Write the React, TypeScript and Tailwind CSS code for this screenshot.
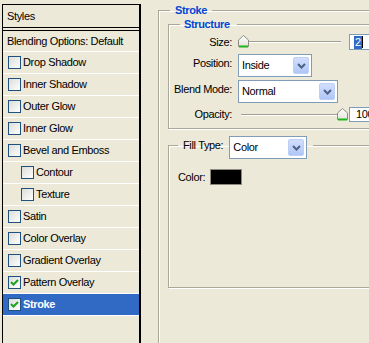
type StyleRow = { label: string; sub?: boolean; on?: boolean; active?: boolean };

const rows: StyleRow[] = [
  { label: "Drop Shadow" },
  { label: "Inner Shadow" },
  { label: "Outer Glow" },
  { label: "Inner Glow" },
  { label: "Bevel and Emboss" },
  { label: "Contour", sub: true },
  { label: "Texture", sub: true },
  { label: "Satin" },
  { label: "Color Overlay" },
  { label: "Gradient Overlay" },
  { label: "Pattern Overlay", on: true },
  { label: "Stroke", on: true, active: true },
];

function Check({ on }: { on?: boolean }) {
  return (
    <span className="flex h-[13px] w-[13px] shrink-0 items-center justify-center border border-[#1c5180] bg-gradient-to-br from-[#dcdcd7] to-white">
      {on && (
        <svg width="11" height="11" viewBox="0 0 11 11">
          <path d="M2 5 L4.5 7.5 L9 3" stroke="#21a121" strokeWidth="2" fill="none" />
        </svg>
      )}
    </span>
  );
}

function Chevron() {
  return (
    <svg width="9" height="6" viewBox="0 0 9 6">
      <path d="M1 1 L4.5 4.5 L8 1" stroke="#4d6185" strokeWidth="2" fill="none" />
    </svg>
  );
}

function Combo({ value, className }: { value: string; className: string }) {
  return (
    <div className={`flex h-[23px] items-center border border-[#7f9db9] bg-white p-[2px] ${className}`}>
      <span className="flex-1 pl-[1px]">{value}</span>
      <span className="flex h-full w-[16px] items-center justify-center rounded-[2px] border border-[#bccff8] bg-gradient-to-b from-[#d2defc] via-[#c1d3fb] to-[#b0c6f6]">
        <Chevron />
      </span>
    </div>
  );
}

function Thumb() {
  return (
    <svg width="11" height="13" viewBox="0 0 11 13">
      <defs>
        <linearGradient id="tg" x1="0" y1="0" x2="0" y2="1">
          <stop offset="0" stopColor="#ffffff" />
          <stop offset="1" stopColor="#e4e3da" />
        </linearGradient>
      </defs>
      <path d="M0.5 11.5 V5 L5.5 0.5 L10.5 5 V11.5 Z" fill="url(#tg)" stroke="#8e8c80" />
      <path d="M1 11.5 H10" stroke="#1fb41f" strokeWidth="2" />
    </svg>
  );
}

function Slider({ thumb, trackLeft }: { thumb: number; trackLeft: number }) {
  return (
    <div className="relative h-[16px] w-[103px]">
      <div className="absolute right-0 top-[7px] h-[2px] border-t border-[#a19f91] bg-white" style={{ left: trackLeft }} />
      <div className="absolute top-[1px]" style={{ left: thumb }}>
        <Thumb />
      </div>
    </div>
  );
}

export default function App() {
  return (
    <div className="flex h-[343px] w-[369px] overflow-hidden bg-[#ece9d8] font-['Liberation_Sans',Arial,sans-serif] text-[11px] leading-[13px] tracking-[-0.35px] text-black">
      {/* styles list */}
      <div className="mt-[4px] ml-[2px] h-[360px] w-[139px] shrink-0 border-t border-r-2 border-l border-black">
        <div className="flex h-[23px] items-center border-b border-black pl-[4px]">Styles</div>
        <div className="mt-[2px] flex h-[22px] items-center border-t border-b border-t-black border-b-white pl-[4px]">
          Blending Options: Default
        </div>
        {rows.map((r) => (
          <div
            key={r.label}
            className={`flex h-[22px] items-center gap-[1px] border-b border-white ${r.sub ? "pl-[18px]" : "pl-[5px]"} ${
              r.active ? "bg-[#316ac5] font-bold text-white" : ""
            }`}
          >
            <Check on={r.on} />
            <span className="pl-[1px]">{r.label}</span>
          </div>
        ))}
      </div>

      {/* stroke settings */}
      <fieldset className="mt-[4px] ml-[17px] h-[400px] w-[260px] shrink-0 border border-[#aca899] pl-[9px] shadow-[inset_1px_1px_0_#fff]">
        <legend className="ml-[2px] px-[5px] font-bold text-[#0046d5]">Stroke</legend>

        <fieldset className="mt-[1px] w-[240px] border border-[#aca899] pb-[6px] shadow-[inset_1px_1px_0_#fff,1px_1px_0_#fff]">
          <legend className="ml-[11px] pr-[7px] pl-[4px] font-bold text-[#0046d5]">Structure</legend>

          <div className="mt-[3px] flex h-[16px] items-center">
            <span className="w-[63px] text-right">Size:</span>
            <span className="ml-[6px]">
              <Slider thumb={0} trackLeft={4} />
            </span>
            <div className="ml-[8px] flex h-[16px] w-[40px] items-center border border-[#7f9db9] bg-white pl-[4px]">
              <span className="bg-[#316ac5] px-[1px] text-white">2</span>
              <span className="h-[12px] w-[1px] bg-black" />
            </div>
          </div>

          <div className="mt-[4px] flex h-[23px] items-center">
            <span className="w-[63px] pb-[4px] text-right">Position:</span>
            <Combo value="Inside" className="ml-[6px] w-[74px]" />
          </div>

          <div className="mt-[3px] flex h-[23px] items-center">
            <span className="w-[63px] pb-[4px] text-right">Blend Mode:</span>
            <Combo value="Normal" className="ml-[6px] w-[100px]" />
          </div>

          <div className="mt-[4px] flex h-[15px] items-center">
            <span className="w-[63px] text-right">Opacity:</span>
            <span className="ml-[6px]">
              <Slider thumb={99} trackLeft={3} />
            </span>
            <div className="ml-[8px] flex h-[15px] w-[40px] items-center border border-[#7f9db9] bg-white pl-[6px]">
              100
            </div>
          </div>
        </fieldset>

        <fieldset className="mt-[7px] w-[240px] border border-[#aca899] shadow-[inset_1px_1px_0_#fff,1px_1px_0_#fff]">
          <legend className="ml-[9px] flex h-[19px] items-center px-[5px] pr-[6px]">
            <span>Fill Type:</span>
            <Combo value="Color" className="mb-[-4px] ml-[6px] w-[78px]" />
          </legend>
          <div className="h-[118px] pl-[9px]">
            <div className="mt-[14px] flex items-center">
              <span>Color:</span>
              <span className="ml-[5px] h-[16px] w-[32px] border border-[#8c8a80] bg-black" />
            </div>
          </div>
        </fieldset>
      </fieldset>
    </div>
  );
}
